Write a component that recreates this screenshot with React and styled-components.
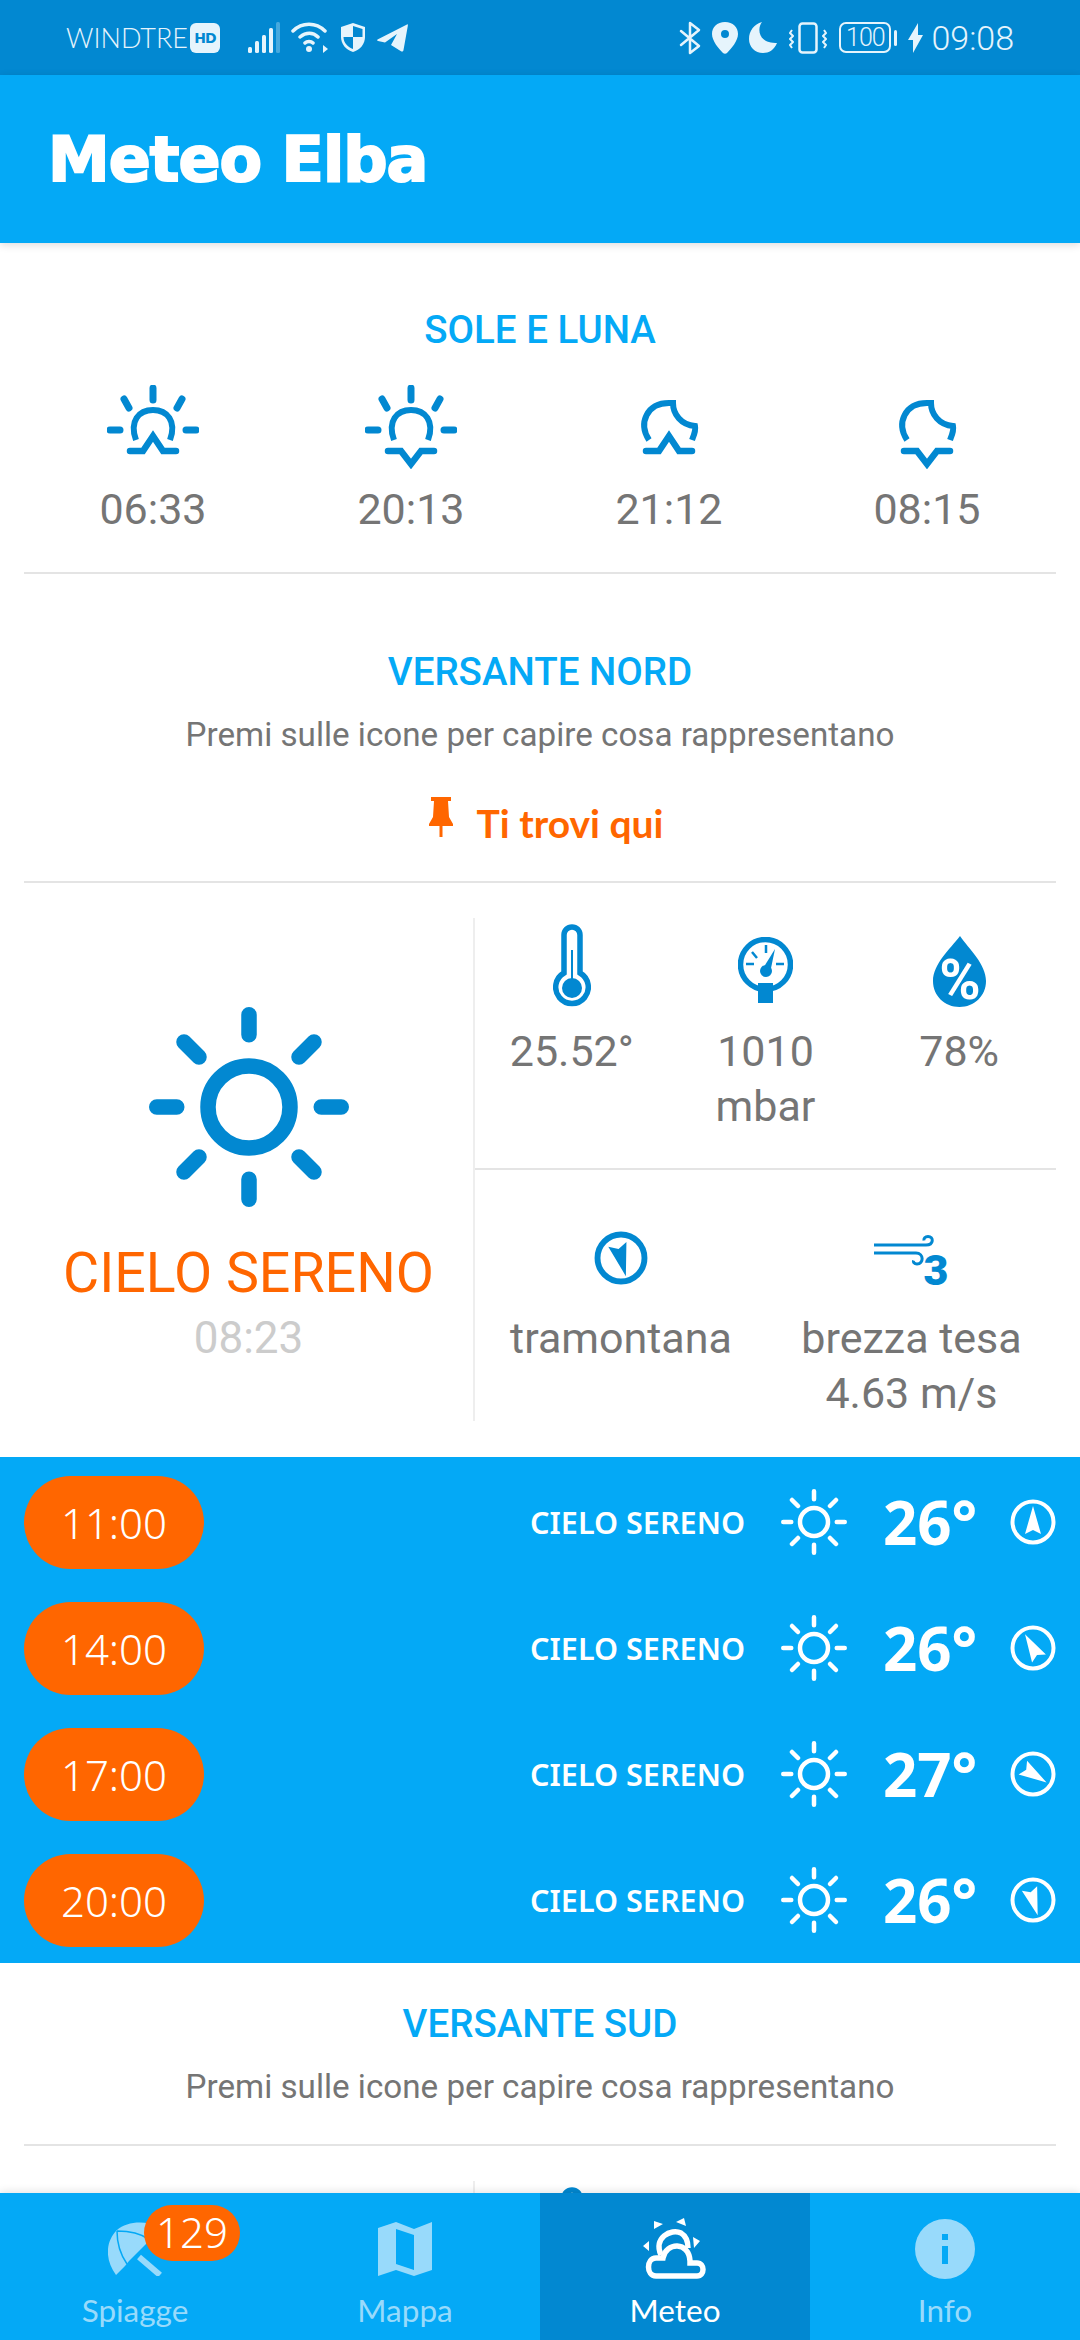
import React from "react";
import styled, { createGlobalStyle } from "styled-components";

const BLUE = "#04a9f6";
const DARK = "#0288d1";
const ORANGE = "#ff6600";
const GREY = "#757575";
const LINE = "#e4e4e4";
const PALE = "#98dafb";
const SB = "#e6f4fc";

const forecast = [
    { hour: "11:00", temp: "26°", wind: 0 },
    { hour: "14:00", temp: "26°", wind: -30 },
    { hour: "17:00", temp: "27°", wind: 122 },
    { hour: "20:00", temp: "26°", wind: 163 },
];

function SunRays({ color, size, ring, ringWidth, rayWidth, long, diag }) {
    const c = size / 2;
    const a = rayWidth / 2;
    return (
        <svg width={size} height={size} viewBox={`0 0 ${size} ${size}`} fill="none" stroke={color} strokeLinecap="round">
            <circle cx={c} cy={c} r={ring} strokeWidth={ringWidth} />
            <g strokeWidth={rayWidth}>
                <path d={`M${c} ${a}V${a + long}M${c} ${size - a}V${size - a - long}M${a} ${c}H${a + long}M${size - a} ${c}H${size - a - long}`} />
                <path d={`M${diag[0]} ${diag[0]}L${diag[1]} ${diag[1]}M${size - diag[0]} ${diag[0]}L${size - diag[1]} ${diag[1]}M${diag[0]} ${size - diag[0]}L${diag[1]} ${size - diag[1]}M${size - diag[0]} ${size - diag[0]}L${size - diag[1]} ${size - diag[1]}`} />
            </g>
        </svg>
    );
}

function Compass({ size, color, angle, width = 4 }) {
    return (
        <svg width={size} height={size} viewBox="0 0 46 46">
            <circle cx="23" cy="23" r={23 - width / 2 - 0.5} fill="none" stroke={color} strokeWidth={width} />
            <path d="M23 7L31 35L23 31L15 35Z" fill={color} transform={`rotate(${angle} 23 23)`} />
        </svg>
    );
}

function SkyEvent({ kind, rising }) {
    return (
        <svg width="92" height="84" viewBox="0 0 92 84" fill="none" stroke={DARK} strokeWidth="6">
            {kind === "sun" ? (
                <g strokeLinecap="round">
                    <path d="M46 3V15M17 14L22 23M75 14L70 23M3 45H13M79 45H89" strokeWidth="7" />
                    <path d="M29 55C22 36 32 25 46 25C60 25 70 36 63 55" strokeLinecap="butt" />
                </g>
            ) : (
                <path d="M26 55C15 38 24 18 46 18H50C50 29 58 40 72 41C73 46 71 50 69 55" />
            )}
            <path d={rising ? "M23 66H36L46 51L56 66H69" : "M23 66H36L46 79L56 66H69"} strokeLinecap="round" strokeWidth="6.500" />
        </svg>
    );
}

function Thermometer() {
    return (
        <svg width="38" height="83" viewBox="0 0 38 83" fill="none" stroke={DARK}>
            <path d="M19 3C23.5 3 27 6.500 27 11V49A16.300 16.300 0 1 1 11 49V11C11 6.500 14.500 3 19 3Z" strokeWidth="5.500" />
            <path d="M19 26V56" strokeWidth="2" />
            <circle cx="19" cy="64" r="10" fill={DARK} stroke="none" />
        </svg>
    );
}

function Gauge() {
    return (
        <svg width="55" height="70" viewBox="0 0 55 70" fill="none" stroke={DARK}>
            <ellipse cx="27.500" cy="27.500" rx="25" ry="25" strokeWidth="5.500" />
            <path d="M8 27H16M14 15L19 21M28 8V16M38 27H46" strokeWidth="2.500" />
            <path d="M20 46H35V66H20Z" fill={DARK} stroke="none" />
            <path d="M24 33L37 12L32 36Z" fill={DARK} stroke="none" />
            <circle cx="28" cy="34" r="6" fill={DARK} stroke="none" />
        </svg>
    );
}

function Drop() {
    return (
        <svg width="53" height="71" viewBox="0 0 53 71" overflow="visible">
            <path d="M27 0C36 13 53 28 53 45C53 60 41 71 26.500 71C12 71 0 60 0 45C0 28 17 13 27 0Z" fill={DARK} />
            <text x="27" y="63" textAnchor="middle" fontFamily="Roboto" fontWeight="700" fontSize="56" fill="#fff">%</text>
        </svg>
    );
}

function WindForce() {
    return (
        <svg width="76" height="50" viewBox="0 0 76 50" fill="none" stroke={DARK} strokeWidth="3" overflow="visible">
            <path d="M0 10H52C60 10 60 1.500 54 1.500C51 1.500 49.500 3.500 50 5.500" />
            <path d="M0 18H42C50 18 50 29 43 29C40 29 39 27 39.500 25.500" />
            <text x="62" y="50" textAnchor="middle" fontFamily="Roboto" fontWeight="900" fontSize="43" fill={DARK} stroke="none">3</text>
        </svg>
    );
}

function Pin() {
    return (
        <svg width="24" height="40" viewBox="0 0 24 40" fill={ORANGE}>
            <path d="M2 0H22V4H19L20 20L24 27V29H0V27L4 20L5 4H2Z" />
            <rect x="10.500" y="28" width="3" height="12" />
        </svg>
    );
}

function Umbrella() {
    return (
        <svg width="54" height="54" viewBox="0 0 54 54" fill={PALE}>
            <path d="M8 53C-3 38 -3 20 9 8C18 0 35 -2 50 4V10L21 39L17 44Z" />
            <path d="M9 9C20 9 32 11 40 17M9 9C9 20 12 32 19 42" fill="none" stroke={BLUE} strokeWidth="1.500" />
            <path d="M31 35L52 53" fill="none" stroke={PALE} strokeWidth="6" />
        </svg>
    );
}

function MapIcon() {
    return (
        <svg width="54" height="54" viewBox="0 0 54 54" fill={PALE}>
            <path fillRule="evenodd" d="M0 6L18 0L36 7L54 0V48L36 54L18 48L0 54ZM18 7V42L36 48V13Z" />
        </svg>
    );
}

function MeteoIcon() {
    return (
        <svg width="64" height="62" viewBox="0 0 64 62" fill="none" stroke="#fff" strokeWidth="5.500">
            <path d="M13 58H54C62 58 62 45 54 45H47V43C46 23 23 24 20 40H13C3 40 3 58 13 58Z" />
            <path d="M18 37C10 20 28 10 38 15C43 18 45 23 45 30" />
            <path d="M11 3L20 6L11 11ZM33 4L41 0L43 8ZM50 19L57 23L51 30ZM0 28L6 23L6 33Z" fill="#fff" stroke="none" />
        </svg>
    );
}

function InfoIcon() {
    return (
        <svg width="60" height="60" viewBox="0 0 60 60">
            <circle cx="30" cy="30" r="30" fill={PALE} />
            <path d="M27 15H33V21H27ZM27 27H33V45H27Z" fill={BLUE} />
        </svg>
    );
}

function StatusLeftIcons() {
    return (
        <>
            <svg width="32" height="31" viewBox="0 0 32 31" fill={SB}>
                <rect x="0" y="25" width="4" height="6" rx="1.500" />
                <rect x="7" y="19" width="4" height="12" rx="1.500" />
                <rect x="14" y="13" width="4" height="18" rx="1.500" />
                <rect x="21" y="6" width="4" height="25" rx="1.500" />
                <rect x="28" y="0" width="4" height="31" rx="1.500" opacity="0.3" />
            </svg>
            <svg width="38" height="31" viewBox="0 0 38 31" fill="none" stroke={SB} strokeWidth="3.500" strokeLinecap="round">
                <path d="M2 9C11 0 25 0 34 9M9 15C15 10 22 10 27 15M14 21C16 19 20 19 22 21" />
                <circle cx="18" cy="27" r="3" fill={SB} stroke="none" />
                <path d="M32 23V31L37 27Z" fill={SB} stroke="none" />
            </svg>
            <svg width="26" height="31" viewBox="0 0 26 31">
                <path d="M13 1L25 5V15C25 22 20 28 13 30C6 28 1 22 1 15V5Z" fill={SB} />
                <path d="M13 4L22.500 7V15H13ZM13 15V27C8 25 3.500 21 3.500 15Z" fill={DARK} />
            </svg>
            <svg width="31" height="28" viewBox="0 0 31 28" fill={SB}>
                <path d="M0.500 15.500L30 0.500C31 0 31 1 30.800 2L26.500 26C26.300 27.500 25 28 24 27.300L14 21L20 10L8 18.500L1 17C0 16.700 0 16 0.500 15.500Z" />
            </svg>
        </>
    );
}

function StatusRightIcons() {
    return (
        <>
            <svg width="22" height="34" viewBox="0 0 22 34" fill="none" stroke={SB} strokeWidth="2.500" strokeLinejoin="round" strokeLinecap="round">
                <path d="M2 10L20 25L11 32V2L20 9L2 24" />
            </svg>
            <svg width="26" height="32" viewBox="0 0 26 32">
                <path fillRule="evenodd" d="M13 0C21 0 26 5 26 12C26 19 19 27 15 31C14 32 12 32 11 31C7 27 0 19 0 12C0 5 5 0 13 0ZM13 8A4 4 0 1 0 13 16A4 4 0 1 0 13 8Z" fill={SB} />
            </svg>
            <svg width="29" height="32" viewBox="0 0 29 32" fill={SB}>
                <path d="M13 0C7 8 11 22 28 21C25 28 20 31 14 31C6 31 0 25 0 17C0 9 5 2 13 0Z" />
            </svg>
            <svg width="38" height="32" viewBox="0 0 38 32" fill="none" stroke={SB}>
                <rect x="10.500" y="1.500" width="17" height="29" rx="3" strokeWidth="2.500" />
                <path d="M3 8L1 11L4 14L1 17L4 20L1 23L3 26M35 8L37 11L34 14L37 17L34 20L37 23L35 26" strokeWidth="2" strokeLinejoin="round" />
            </svg>
        </>
    );
}

export default function App() {
    return (
        <Phone>
            <GlobalStyle />
            <StatusBar>
                <StatusGroup>
                    <Carrier>WINDTRE</Carrier>
                    <HdBadge>HD</HdBadge>
                    <SignalGap />
                    <StatusLeftIcons />
                </StatusGroup>
                <StatusGroup>
                    <StatusRightIcons />
                    <Battery>100</Battery>
                    <BatteryNub />
                    <svg width="15" height="30" viewBox="0 0 15 30" fill={SB}><path d="M10 0V12H15L5 30V17H0Z" /></svg>
                    <Clock>09:08</Clock>
                </StatusGroup>
            </StatusBar>
            <AppBar><AppTitle>Meteo Elba</AppTitle></AppBar>
            <Content>
                <SectionTitle $top="65px">SOLE E LUNA</SectionTitle>
                <EventGrid>
                    <EventCell><SkyEvent kind="sun" rising /><EventTime>06:33</EventTime></EventCell>
                    <EventCell><SkyEvent kind="sun" /><EventTime>20:13</EventTime></EventCell>
                    <EventCell><SkyEvent kind="moon" rising /><EventTime>21:12</EventTime></EventCell>
                    <EventCell><SkyEvent kind="moon" /><EventTime>08:15</EventTime></EventCell>
                </EventGrid>
                <Divider $top="38px" />

                <SectionTitle $top="76px">VERSANTE NORD</SectionTitle>
                <Hint>Premi sulle icone per capire cosa rappresentano</Hint>
                <YouAreHere><Pin /><YouAreHereText>Ti trovi qui</YouAreHereText></YouAreHere>
                <Divider $top="40px" />

                <WeatherGrid>
                    <NowColumn>
                        <SunRays color={DARK} size={200} ring={41} ringWidth={15.5} rayWidth={15.5} long={20} diag={[35, 50]} />
                        <Condition>CIELO SERENO</Condition>
                        <UpdatedAt>08:23</UpdatedAt>
                    </NowColumn>
                    <DetailColumn>
                        <MeasureRow>
                            <Measure>
                                <MeasureIcon><Thermometer /></MeasureIcon>
                                <MeasureValue>25.52°</MeasureValue>
                            </Measure>
                            <Measure>
                                <MeasureIcon><Gauge /></MeasureIcon>
                                <MeasureValue>1010<br />mbar</MeasureValue>
                            </Measure>
                            <Measure>
                                <MeasureIcon><Drop /></MeasureIcon>
                                <MeasureValue>78%</MeasureValue>
                            </Measure>
                        </MeasureRow>
                        <WindRow>
                            <WindCell $width="293px">
                                <WindIcon><Compass size={54} color={DARK} angle={165} width={5} /></WindIcon>
                                <MeasureValue $wide>tramontana</MeasureValue>
                            </WindCell>
                            <WindCell $width="290px">
                                <WindIcon><WindForce /></WindIcon>
                                <MeasureValue $wide>brezza tesa<br />4.63 m/s</MeasureValue>
                            </WindCell>
                        </WindRow>
                    </DetailColumn>
                </WeatherGrid>

                <ForecastList>
                    {forecast.map((item) => (
                        <ForecastRow key={item.hour}>
                            <HourPill>{item.hour}</HourPill>
                            <ForecastText>CIELO SERENO</ForecastText>
                            <ForecastSun>
                                <SunRays color="#fff" size={66} ring={14} ringWidth={4.5} rayWidth={4.5} long={8} diag={[11, 17]} />
                            </ForecastSun>
                            <ForecastTemp>{item.temp}</ForecastTemp>
                            <Compass size={46} color="#fff" angle={item.wind} />
                        </ForecastRow>
                    ))}
                </ForecastList>

                <SectionTitle $top="39px">VERSANTE SUD</SectionTitle>
                <Hint>Premi sulle icone per capire cosa rappresentano</Hint>
                <Divider $top="35px" />

                {/* only the top of the second block shows above the nav */}
                <WeatherGrid>
                    <NowColumn />
                    <DetailColumn>
                        <MeasureRow>
                            <Measure><MeasureIcon><Thermometer /></MeasureIcon></Measure>
                        </MeasureRow>
                    </DetailColumn>
                </WeatherGrid>
            </Content>
            <BottomNav>
                <NavTab>
                    <NavIcon><Umbrella /></NavIcon>
                    <NavLabel>Spiagge</NavLabel>
                    <NavBadge>129</NavBadge>
                </NavTab>
                <NavTab>
                    <NavIcon><MapIcon /></NavIcon>
                    <NavLabel>Mappa</NavLabel>
                </NavTab>
                <NavTab $active>
                    <NavIcon><MeteoIcon /></NavIcon>
                    <NavLabel $active>Meteo</NavLabel>
                </NavTab>
                <NavTab>
                    <NavIcon><InfoIcon /></NavIcon>
                    <NavLabel>Info</NavLabel>
                </NavTab>
            </BottomNav>
        </Phone>
    );
}

//STYLED COMPONENTS

const GlobalStyle = createGlobalStyle`
    html, body {
        margin: 0;
        padding: 0;
        background: #ffffff;
    }
    * {
        box-sizing: border-box;
    }
`;

const Phone = styled.div`
    width: 1080px;
    height: 2340px;
    display: flex;
    flex-direction: column;
    overflow: hidden;
    font-family: "Roboto", sans-serif;
    background: #ffffff;
`;

//STATUS BAR
const StatusBar = styled.div`
    height: 75px;
    flex: none;
    padding: 0 66px;
    display: flex;
    align-items: center;
    justify-content: space-between;
    background: ${DARK};
    color: ${SB};
`;

const StatusGroup = styled.div`
    display: flex;
    align-items: center;
    gap: 11px;
`;

const Carrier = styled.span`
    font-family: "Lato", sans-serif;
    font-weight: 300;
    font-size: 27px;
    margin-right: -9px;
`;

const HdBadge = styled.span`
    width: 30px;
    height: 30px;
    border-radius: 6px;
    background: ${SB};
    color: ${DARK};
    font-family: "DejaVu Sans", sans-serif;
    font-weight: 700;
    font-size: 14px;
    letter-spacing: -1px;
    display: flex;
    align-items: center;
    justify-content: center;
`;

const SignalGap = styled.span`
    width: 6px;
`;

const Battery = styled.span`
    width: 52px;
    height: 31px;
    border: 2px solid ${SB};
    border-radius: 7px;
    font-weight: 300;
    font-size: 25px;
    line-height: 27px;
    text-align: center;
    letter-spacing: -1px;
    margin-left: 1px;
`;

const BatteryNub = styled.span`
    width: 3px;
    height: 16px;
    background: ${SB};
    border-radius: 2px;
    margin-left: -8px;
`;

const Clock = styled.span`
    font-weight: 300;
    font-size: 34px;
    margin-left: -3px;
`;

//APP BAR
const AppBar = styled.header`
    height: 168px;
    flex: none;
    padding-left: 48px;
    display: flex;
    align-items: center;
    background: ${BLUE};
    box-shadow: 0 2px 8px rgba(0, 0, 0, 0.14);
    position: relative;
    z-index: 2;
`;

const AppTitle = styled.h1`
    margin: 0;
    font-family: "DejaVu Sans", sans-serif;
    font-weight: 700;
    font-size: 62px;
    letter-spacing: -1px;
    color: #ffffff;
    -webkit-text-stroke: 2px #ffffff;
`;

//CONTENT
const Content = styled.main`
    flex: 1;
    min-height: 0;
    overflow: hidden;
`;

const SectionTitle = styled.h2`
    margin: ${(props) => props.$top} 0 0;
    font-weight: 500;
    font-size: 38.5px;
    line-height: 44px;
    text-align: center;
    color: ${BLUE};
`;

const EventGrid = styled.div`
    margin: 33px 24px 0;
    display: grid;
    grid-template-columns: repeat(4, 1fr);
`;

const EventCell = styled.div`
    display: flex;
    flex-direction: column;
    align-items: center;
`;

const EventTime = styled.span`
    margin-top: 15px;
    font-size: 43px;
    line-height: 50px;
    color: ${GREY};
`;

const Divider = styled.div`
    margin: ${(props) => props.$top} 24px 0;
    height: 2px;
    background: ${LINE};
`;

const Hint = styled.p`
    margin: 19px 0 0;
    font-size: 33.2px;
    line-height: 44px;
    text-align: center;
    color: ${GREY};
`;

const YouAreHere = styled.div`
    margin-top: 40px;
    padding-left: 12px;
    height: 44px;
    display: flex;
    justify-content: center;
    gap: 24px;
`;

const YouAreHereText = styled.span`
    font-family: "Lato", sans-serif;
    font-weight: 700;
    font-size: 39px;
    line-height: 52px;
    color: ${ORANGE};
`;

//WEATHER
const WeatherGrid = styled.section`
    margin: 35px 24px 37px;
    height: 502px;
    display: grid;
    grid-template-columns: 449px 583px;
`;

const NowColumn = styled.div`
    padding-top: 89px;
    display: flex;
    flex-direction: column;
    align-items: center;
`;

const Condition = styled.div`
    margin-top: 37px;
    font-size: 55.5px;
    line-height: 60px;
    color: ${ORANGE};
`;

const UpdatedAt = styled.div`
    margin-top: 9px;
    font-size: 44px;
    line-height: 50px;
    color: #cccccc;
`;

const DetailColumn = styled.div`
    border-left: 2px solid #eeeeee;
    display: flex;
    flex-direction: column;
`;

const MeasureRow = styled.div`
    height: 252px;
    padding-top: 6px;
    border-bottom: 2px solid ${LINE};
    display: grid;
    grid-template-columns: repeat(3, 1fr);
`;

const Measure = styled.div`
    display: flex;
    flex-direction: column;
    align-items: center;
`;

const MeasureIcon = styled.div`
    height: 83px;
    display: flex;
    align-items: flex-end;
`;

const MeasureValue = styled.div`
    margin-top: ${(props) => (props.$wide ? "26px" : "17px")};
    font-size: 43px;
    line-height: 55px;
    text-align: center;
    color: ${GREY};
`;

const WindRow = styled.div`
    padding-top: 59px;
    display: flex;
`;

const WindCell = styled.div`
    width: ${(props) => props.$width};
    display: flex;
    flex-direction: column;
    align-items: center;
`;

const WindIcon = styled.div`
    height: 56px;
    display: flex;
    align-items: flex-end;
`;

//FORECAST
const ForecastList = styled.section`
    padding: 2px 24px 0;
    height: 506px;
    background: ${BLUE};
`;

const ForecastRow = styled.div`
    height: 126px;
    display: flex;
    align-items: center;
    color: #ffffff;
`;

const HourPill = styled.div`
    width: 180px;
    height: 93px;
    border-radius: 47px;
    background: ${ORANGE};
    font-family: "Noto Sans", sans-serif;
    font-weight: 300;
    font-size: 42px;
    line-height: 93px;
    text-align: center;
`;

const ForecastText = styled.div`
    margin-left: auto;
    font-family: "Noto Sans", sans-serif;
    font-weight: 600;
    font-size: 30.6px;
`;

const ForecastSun = styled.div`
    margin-left: 36px;
    height: 66px;
`;

const ForecastTemp = styled.div`
    width: 127px;
    margin-left: 36px;
    font-family: "Open Sans", sans-serif;
    font-weight: 700;
    font-size: 60px;
    line-height: 70px;
`;

//BOTTOM NAV
const BottomNav = styled.nav`
    height: 147px;
    flex: none;
    display: grid;
    grid-template-columns: repeat(4, 1fr);
    background: ${BLUE};
    box-shadow: 0 -2px 8px rgba(0, 0, 0, 0.1);
    position: relative;
    z-index: 2;
`;

const NavTab = styled.div`
    position: relative;
    padding-top: 26px;
    display: flex;
    flex-direction: column;
    align-items: center;
    background: ${(props) => (props.$active ? DARK : "transparent")};
`;

const NavIcon = styled.div`
    height: 60px;
    display: flex;
    align-items: center;
`;

const NavLabel = styled.span`
    margin-top: 11px;
    font-family: "Lato", sans-serif;
    font-size: 31.5px;
    line-height: 40px;
    color: ${(props) => (props.$active ? "#ffffff" : PALE)};
`;

const NavBadge = styled.span`
    position: absolute;
    left: 144px;
    top: 12px;
    width: 96px;
    height: 56px;
    border-radius: 28px;
    background: ${ORANGE};
    color: #ffffff;
    font-family: "Noto Sans", sans-serif;
    font-weight: 300;
    font-size: 42px;
    line-height: 54px;
    text-align: center;
`;
